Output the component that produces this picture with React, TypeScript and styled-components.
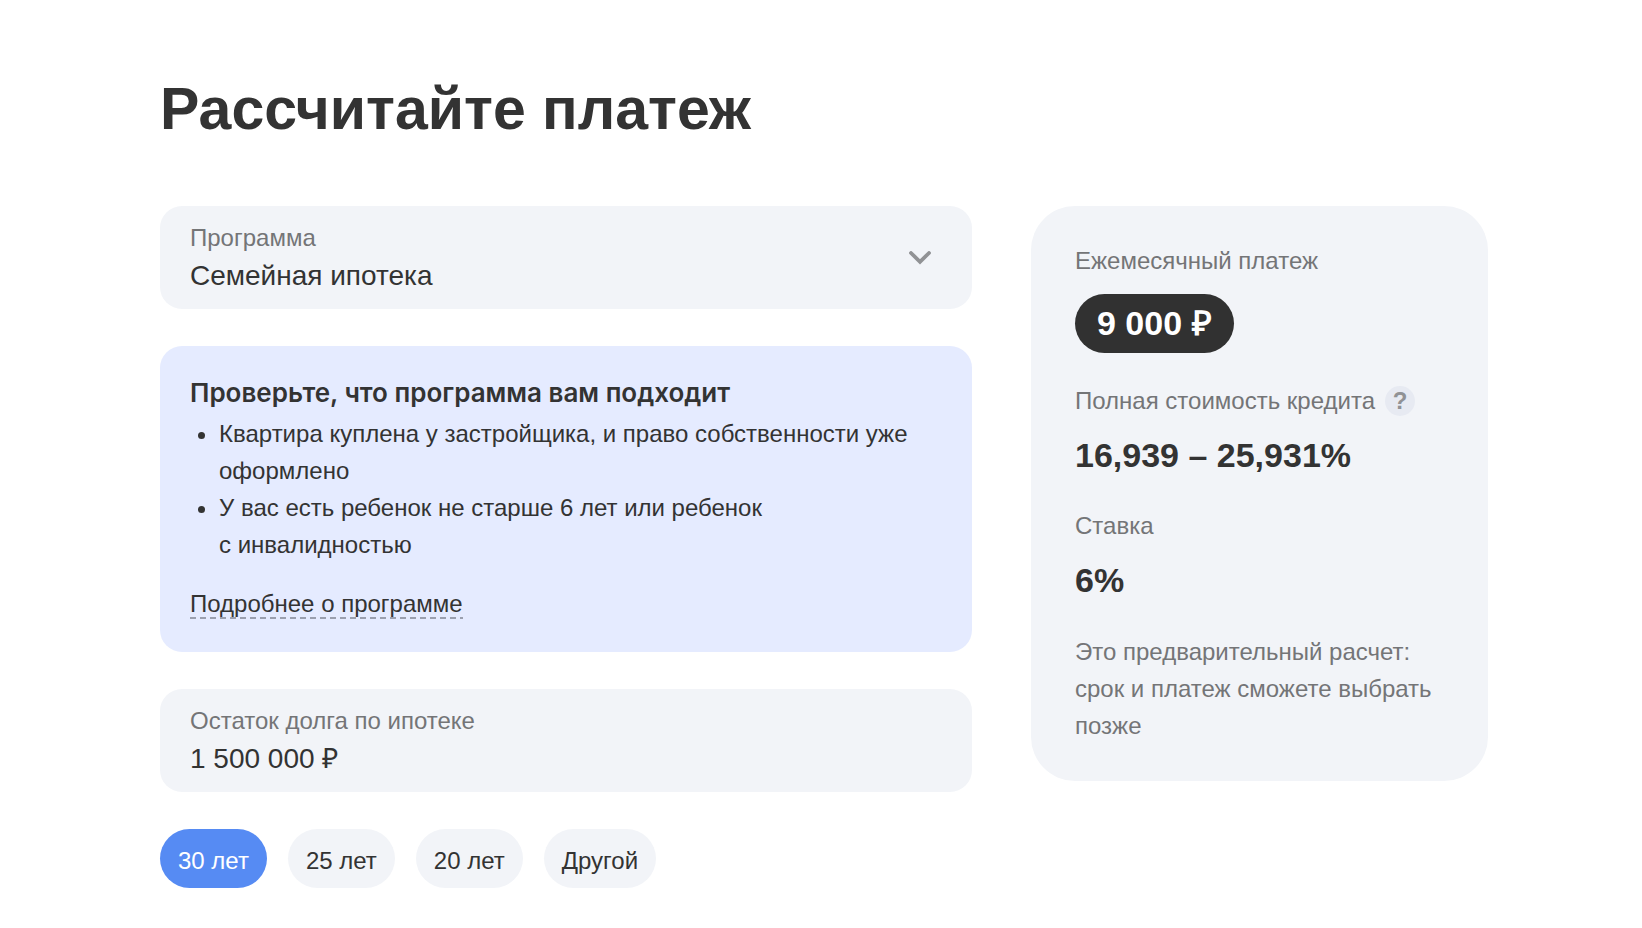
import { useState } from 'react';
import styled, { createGlobalStyle, css } from 'styled-components';

const color = {
  text: '#333333',
  muted: '#747577',
  surface: '#f2f4f8',
  notice: '#e5ebff',
  dark: '#313131',
  accent: '#568bf3',
  help: '#e7eaf2',
  icon: '#919295',
  dash: '#9a9fae',
};

const GlobalStyle = createGlobalStyle`
  *, *::before, *::after { box-sizing: border-box; }
  body {
    margin: 0;
    background: #ffffff;
    color: ${color.text};
    font-family: "Liberation Sans", Arial, sans-serif;
    font-size: 24px;
    line-height: 37px;
  }
  button, input, select { font: inherit; color: inherit; }
`;

const Page = styled.main`
  padding: 76px 154px 40px 160px;

  @media (max-width: 1100px) {
    padding: 40px 24px;
  }
`;

const Title = styled.h1`
  margin: 0 0 64px;
  font-size: 59px;
  line-height: 66px;
  font-weight: 700;
`;

const Columns = styled.div`
  display: grid;
  grid-template-columns: minmax(0, 812fr) minmax(0, 457fr);
  align-items: start;
  gap: 59px;

  @media (max-width: 1100px) {
    grid-template-columns: minmax(0, 1fr);
  }
`;

const Form = styled.form`
  display: flex;
  flex-direction: column;
  gap: 37px;
`;

const Field = styled.div`
  position: relative;
  display: flex;
  flex-direction: column;
  gap: 1px;
  padding: 13px 30px 15px;
  border-radius: 22px;
  background: ${color.surface};
`;

const FieldLabel = styled.label`
  line-height: 38px;
  color: ${color.muted};
`;

const control = css`
  width: 100%;
  height: 36px;
  margin: 0;
  padding: 0;
  border: 0;
  outline: 0;
  background: transparent;
  font-size: 28px;
  line-height: 36px;
`;

const Select = styled.select`
  ${control}
  appearance: none;
  cursor: pointer;
`;

const TextInput = styled.input`
  ${control}
`;

const Chevron = styled.svg`
  position: absolute;
  top: 50%;
  right: 41px;
  margin-top: -7px;
  pointer-events: none;
`;

const Notice = styled.section`
  padding: 28px 30px 33px;
  border-radius: 22px;
  background: ${color.notice};
`;

const NoticeTitle = styled.h2`
  margin: 0 0 4px;
  font-family: Inter, "Liberation Sans", sans-serif;
  font-size: 26px;
  line-height: 37px;
  font-weight: 600;
`;

const NoticeList = styled.ul`
  margin: 0 0 27px;
  padding: 0 0 0 29px;
`;

const DashedLink = styled.a`
  display: block;
  width: fit-content;
  padding-bottom: 2px;
  line-height: 27px;
  color: inherit;
  text-decoration: none;
  background: repeating-linear-gradient(90deg, ${color.dash} 0 6px, transparent 6px 10px) left bottom / 100% 2px no-repeat;
`;

const Terms = styled.div`
  display: flex;
  flex-wrap: wrap;
  gap: 21px;
`;

const TermButton = styled.button<{ $active: boolean }>`
  padding: 13px 18px 9px;
  border: 0;
  border-radius: 30px;
  background: ${(p) => (p.$active ? color.accent : color.surface)};
  color: ${(p) => (p.$active ? '#ffffff' : color.text)};
  cursor: pointer;
`;

const Summary = styled.aside`
  padding: 36px 44px 37px;
  border-radius: 44px;
  background: ${color.surface};
`;

const Figures = styled.dl`
  display: flex;
  flex-direction: column;
  gap: 29px;
  margin: 0;
`;

const FigureLabel = styled.dt`
  display: flex;
  align-items: center;
  gap: 10px;
  color: ${color.muted};
`;

const Figure = styled.dd`
  margin: 14px 0 0;
  font-size: 34px;
  line-height: 45px;
  font-weight: 700;
`;

const Payment = styled(Figure)`
  width: fit-content;
  margin-top: 15px;
  padding: 0 22px;
  border-radius: 30px;
  background: ${color.dark};
  color: #ffffff;
  line-height: 59px;
`;

const HelpButton = styled.button`
  flex: none;
  width: 30px;
  height: 30px;
  padding: 0;
  border: 0;
  border-radius: 50%;
  background: ${color.help};
  color: ${color.icon};
  font-weight: 700;
  line-height: 30px;
  cursor: pointer;
`;

const Note = styled.p`
  margin: 30px 0 0;
  color: ${color.muted};
`;

const terms = ['30 лет', '25 лет', '20 лет', 'Другой'];

const conditions = [
  'Квартира куплена у застройщика, и право собственности уже оформлено',
  'У вас есть ребенок не старше 6 лет или ребенок с\u00a0инвалидностью',
];

export default function App() {
  const [term, setTerm] = useState(terms[0]);
  const [debt, setDebt] = useState('1 500 000 ₽');

  return (
    <>
      <GlobalStyle />
      <Page>
        <Title>Рассчитайте платеж</Title>
        <Columns>
          <Form>
            <Field>
              <FieldLabel htmlFor="program">Программа</FieldLabel>
              <Select id="program" defaultValue="family">
                <option value="family">Семейная ипотека</option>
              </Select>
              <Chevron width="22" height="14" viewBox="0 0 22 14" fill="none" aria-hidden="true">
                <path d="M2 2 11 10.8 20 2" stroke={color.icon} strokeWidth="3.8" strokeLinecap="round" />
              </Chevron>
            </Field>

            <Notice>
              <NoticeTitle>Проверьте, что программа вам подходит</NoticeTitle>
              <NoticeList>
                {conditions.map((condition) => (
                  <li key={condition}>{condition}</li>
                ))}
              </NoticeList>
              <DashedLink href="#program">Подробнее о программе</DashedLink>
            </Notice>

            <Field>
              <FieldLabel htmlFor="debt">Остаток долга по ипотеке</FieldLabel>
              <TextInput id="debt" value={debt} onChange={(e) => setDebt(e.target.value)} />
            </Field>

            <Terms role="group" aria-label="Срок">
              {terms.map((t) => (
                <TermButton
                  key={t}
                  type="button"
                  $active={t === term}
                  aria-pressed={t === term}
                  onClick={() => setTerm(t)}
                >
                  {t}
                </TermButton>
              ))}
            </Terms>
          </Form>

          <Summary>
            <Figures>
              <div>
                <FigureLabel>Ежемесячный платеж</FigureLabel>
                <Payment>9 000 ₽</Payment>
              </div>
              <div>
                <FigureLabel>
                  Полная стоимость кредита
                  <HelpButton type="button">?</HelpButton>
                </FigureLabel>
                <Figure>16,939 – 25,931%</Figure>
              </div>
              <div>
                <FigureLabel>Ставка</FigureLabel>
                <Figure>6%</Figure>
              </div>
            </Figures>
            <Note>Это предварительный расчет: срок и платеж сможете выбрать позже</Note>
          </Summary>
        </Columns>
      </Page>
    </>
  );
}
